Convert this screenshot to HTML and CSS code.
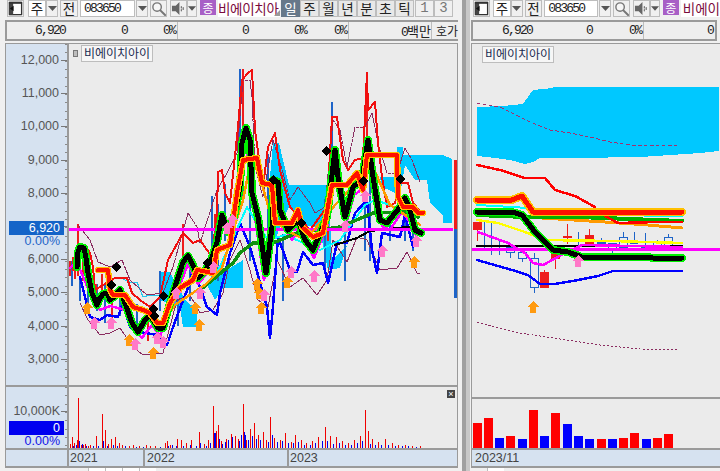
FILE: index.html
```html
<!DOCTYPE html>
<html lang="ko">
<head>
<meta charset="utf-8">
<title>비에이치아이</title>
<link rel="stylesheet" href="styles.css">
</head>
<body>
<svg class="defs" width="0" height="0">
  <defs>
    <path id="up" d="M0-6 6 0H3V6H-3V0H-6Z"/>
    <path id="dia" d="M0-5 5 0 0 5-5 0Z"/>
    <symbol id="win" viewBox="0 0 16 16"><rect x="1.5" y="1.5" width="13" height="13" fill="#fff" stroke="#333" stroke-width="1.4"/><path d="M1.5 1.5H5.5V14.5H1.5Z" fill="#444"/><path d="M1 1H15V3H1Z" fill="#333"/><path d="M6 5 2 8 6 11Z" fill="#111"/></symbol>
    <symbol id="arrow" viewBox="0 0 9 5"><path d="M0 0H9L4.500 5Z" fill="#555"/></symbol>
    <symbol id="mag" viewBox="0 0 16 16"><circle cx="6.500" cy="6.500" r="4.500" fill="#f6f6f6" stroke="#777" stroke-width="1.500"/><path d="M10 10 15 15" stroke="#777" stroke-width="2.200"/></symbol>
    <symbol id="spk" viewBox="0 0 16 16"><path d="M1 5H5L9 1V15L5 11H1Z" fill="#666"/><path d="M11 6V7.500M11 9V10.500M13 7V9" stroke="#666" stroke-width="1.200"/></symbol>
  </defs>
</svg>

<main class="app">
  <section class="panel panel-left">
    <div class="toolbar">
      <button class="tool tool-icon"><svg class="ico16"><use href="#win"/></svg></button>
      <span class="combo combo-type">주</span>
      <button class="tool drop"><svg class="ico-arrow"><use href="#arrow"/></svg></button>
      <button class="tool cap cap-jeon">전</button>
      <span class="code">083650</span>
      <button class="tool drop"><svg class="ico-arrow"><use href="#arrow"/></svg></button>
      <button class="tool tool-icon"><svg class="ico16"><use href="#mag"/></svg></button>
      <button class="tool tool-icon spk-gap"><svg class="ico16"><use href="#spk"/></svg></button>
      <button class="tool drop drop-thin"><svg class="ico-arrow"><use href="#arrow"/></svg></button>
      <span class="badge">종</span>
      <span class="name name-left">비에이치아</span>
      <button class="period active">일</button>
      <button class="period">주</button>
      <button class="period">월</button>
      <button class="period">년</button>
      <button class="period">분</button>
      <button class="period">초</button>
      <button class="period">틱</button>
      <button class="period num first-num">1</button>
      <button class="period num">3</button>
    </div>
    <div class="info info-left">
      <span class="cell c1 num-text">6,920</span>
      <span class="cell c2 num-text">0</span>
      <span class="cell c3 num-text sep">0%</span>
      <span class="cell c4 num-text">0</span>
      <span class="cell c5 num-text">0%</span>
      <span class="cell c6 num-text sep">0%</span>
      <span class="cell c7 sep"><span class="num-text">0</span>백만</span>
      <span class="cell c8">호가</span>
    </div>
    <div class="frame">
      <div class="row row-main">
        <div class="axis axis-main">
          <span class="tick">12,000</span>
          <span class="tick">11,000</span>
          <span class="tick">10,000</span>
          <span class="tick">9,000</span>
          <span class="tick">8,000</span>
          <span class="tick">7,000</span>
          <span class="tick">6,000</span>
          <span class="tick">5,000</span>
          <span class="tick">4,000</span>
          <span class="tick">3,000</span>
          <div class="tag tag-price"><b class="tag-value">6,920</b><i class="tag-pct">0.00%</i></div>
        </div>
        <div class="plot">
          <div class="legend legend-left"><i class="legend-box"></i><span class="legend-name">비에이치아이</span></div>
          <svg class="chart chart-left" viewBox="69 44 388 343" shape-rendering="crispEdges">
            <defs>
              <polyline id="lblack" points="77,267 78,252 80,247 84,248 86,258 88,273 92,293 97,305 100,298 103,294 107,293 110,300 115,296 120,290 125,303 132,323 138,332 145,320 150,315 158,328 163,328 168,310 175,287 183,262 188,256 193,265 198,278 204,272 210,263 217,242 222,215 228,232 234,217 240,187 242,143 246,128 250,140 252,193 258,217 266,273 272,227 273,180 278,182 280,210 288,230 298,220 305,240 313,250 327,217 335,150 338,177 345,217 353,187 362,180 368,140 373,177 380,220 387,223 400,207 405,198 410,210 415,230 421,233"/>
              <polyline id="lred" points="98,270 108,270 110,290 113,295 125,295 133,307 143,310 150,313 157,323 163,323 170,303 180,288 193,280 197,270 213,273 217,250 230,245 237,193 243,160 257,158 262,183 272,185 275,223 292,223 298,210 302,227 313,237 323,233 332,185 347,185 357,173 363,190 367,155 397,155 398,197 403,207 413,207 418,213 423,213"/>
            </defs>
            <path class="cloud" d="M159 272 170 272 185 300 197 310 197 327 183 327 180 307 159 300Z"/>
            <path class="cloud" d="M207 285 213 273 230 268 243 260 243 288 223 288 215 300Z"/>
            <path class="cloud" d="M268 200 273 143 279 143 289 185 327 185 329 200 332 260 347 245 340 268 328 270 322 240 315 227 300 225 290 205 285 215 275 240 268 230Z"/>
            <path class="cloud" d="M380 177 397 177 397 147 403 147 403 155 443 155 452 159 452 223 443 223 443 215 430 203 427 180 415 180 405 165 400 195 382 187Z"/>
            <path class="spike-blue" d="M72 262V285M80 278V300M88 275V305M97 285V310M105 285V322M120 290V315M137 305V335M160 272V310M178 285V325M190 270V300M212 197V270M218 205V280M225 185V240M240 70V170M243 80V195M250 140V260M268 155V265M283 235V300M325 200V270M332 103V190M345 210V280M365 150V250M370 180V260M390 215V240M405 200V240M413 215V250"/>
            <path class="spike-red" d="M70 262V275M73 258V270M75 262V278M78 225V275M83 262V280M96 285V300M102 275V300M112 300V320M148 315V340M183 225V270M215 215V255M243 70V125M367 73V160M328 200V240"/>
            <polyline class="cyan-thin" points="123,279 130,282 137,282 143,297 150,295 163,295 178,300"/>
            <polyline class="dash" points="78,225 90,240 98,262 110,267 122,260 130,280 147,295 163,293 173,267 188,213 197,227 200,243 217,190 227,173 237,153 243,80 250,80 252,97 255,167 263,197 273,140 283,173 290,200 298,187 310,203 315,213 325,207 333,120 340,130 347,167 355,127 365,127 372,113 378,143 387,173 397,173 405,148 412,160 420,182"/>
            <polyline class="dash-solid" points="80,303 88,320 100,335 110,333 120,328 133,347 143,355 163,353 177,300 190,295 200,313 213,310 223,293 230,260 240,240 250,270 258,300 268,307 277,260 290,287 303,278 317,295 327,280 333,240 347,262 357,237 367,240 380,270 397,268 407,252 417,273 420,274"/>
            <polyline class="blue-line" points="80,277 90,317 100,320 107,315 118,317 123,303 130,327 140,332 157,335 167,345 173,327 182,303 190,283 193,267 207,307 217,315 220,293 230,253 237,233 240,223 250,247 267,307 270,338 273,307 278,237 290,270 297,272 303,252 313,265 323,263 328,283 337,243 347,243 355,213 367,200 372,250 377,273 382,233 400,237 405,215 413,247"/>
            <polyline class="red-thin" points="77,263 85,245 90,253 93,267 95,290 103,285 115,278 127,278 132,293 140,300 150,307 160,297 168,260 183,233 193,243 200,240 207,250 212,257 215,230 217,213 218,172 222,170 225,193 230,203 238,127 242,80 248,73 252,70 255,130 263,187 268,147 275,133 280,170 290,207 310,230 327,207 332,117 337,117 343,160 348,170 355,160 363,158 367,73 368,110 375,102 378,143 382,177 387,207 395,203 400,183 408,183 413,203 422,213"/>
            <polyline class="cyan-line" points="217,273 232,240 247,207 258,225 268,240 285,235 320,250 340,240 365,205 375,200 390,205"/>
            <polyline class="magenta-thin" points="70,268 77,262 92,298 100,310 110,306 125,310 134,330 142,338 152,325 160,336 168,318 178,290 188,264 198,284 212,268 222,225 232,222 240,190 243,130 250,175 256,225 264,280 272,235 276,190 283,225 292,240 300,228 308,246 314,258 328,224 334,160 340,190 346,225 354,195 364,188 367,150 374,190 382,226 390,230 402,212 410,222 417,238"/>
            <polyline class="green-line" points="200,290 233,263 240,253 253,243 273,243 297,233 340,227 373,213 407,212 418,217"/>
            <polyline class="black-thin" points="335,245 357,238 370,231 407,227 413,228"/>
            <rect class="magenta-bar" x="69" y="228" width="384" height="3"/>
            <polyline class="orange-side" points="165,320 175,305 190,295 205,285 222,268 235,225 243,200 250,165 258,170 265,195 272,220 290,232 305,240 323,220 335,205 345,195 358,180 372,165 390,205 405,215 420,225"/>
            <use href="#lblack" class="thick-green"/>
            <use href="#lblack" class="thick-black"/>
            <use href="#lred" class="thick-yellow-l"/>
            <use href="#lred" class="thick-red-l"/>
            <g class="arrows-orange">
              <use href="#up" x="87" y="308"/><use href="#up" x="129" y="340"/><use href="#up" x="153" y="353"/><use href="#up" x="195" y="308"/><use href="#up" x="199" y="325"/><use href="#up" x="257" y="284"/><use href="#up" x="259" y="293"/><use href="#up" x="261" y="308"/><use href="#up" x="287" y="282"/><use href="#up" x="414" y="262"/>
            </g>
            <g class="arrows-pink">
              <use href="#up" x="94" y="323"/><use href="#up" x="111" y="323"/><use href="#up" x="135" y="344"/><use href="#up" x="157" y="338"/><use href="#up" x="163" y="342"/><use href="#up" x="176" y="293"/><use href="#up" x="200" y="293"/><use href="#up" x="213" y="267"/><use href="#up" x="227" y="228"/><use href="#up" x="232" y="220"/><use href="#up" x="264" y="295"/><use href="#up" x="291" y="272"/><use href="#up" x="314" y="276"/><use href="#up" x="345" y="226"/><use href="#up" x="365" y="196"/><use href="#up" x="382" y="251"/><use href="#up" x="416" y="241"/>
            </g>
            <g class="diamonds">
              <use href="#dia" x="116" y="267"/><use href="#dia" x="111" y="285"/><use href="#dia" x="153" y="309"/><use href="#dia" x="154" y="316"/><use href="#dia" x="163" y="296"/><use href="#dia" x="207" y="263"/><use href="#dia" x="273" y="180"/><use href="#dia" x="301" y="223"/><use href="#dia" x="326" y="151"/><use href="#dia" x="363" y="181"/><use href="#dia" x="400" y="179"/>
            </g>
            <rect class="range-red" x="454" y="160" width="3" height="69"/>
            <rect class="range-blue" x="454" y="229" width="3" height="69"/>
          </svg>
        </div>
      </div>
      <div class="row row-vol">
        <div class="axis axis-vol">
          <span class="tick tick-vol">10,000K</span>
          <div class="tag tag-vol"><b class="tag-value tag-value-vol">0</b><i class="tag-pct tag-pct-vol">0.00%</i></div>
        </div>
        <div class="plot">
          <svg class="chart chart-vol-left" viewBox="69 388 388 62" shape-rendering="crispEdges">
            <path class="vol-red" d="M70.500 449V445M72.500 449V438M74.500 449V444M77.500 449V441M78.500 449V399M81.500 449V446M83.500 449V446M85.500 449V445M88.500 449V447M90.500 449V446M96.500 449V437M102.500 449V415M105.500 449V431M108.500 449V445M111.500 449V440M115.500 449V438M119.500 449V444M122.500 449V446M129.500 449V447M133.500 449V446M139.500 449V447M146.500 449V446M150.500 449V447M155.500 449V447M165.500 449V444M167.500 449V442M170.500 449V446M177.500 449V440M181.500 449V441M186.500 449V444M191.500 449V441M199.500 449V433M204.500 449V445M208.500 449V441M213.500 449V407M216.500 449V432M218.500 449V426M221.500 449V442M226.500 449V440M231.500 449V435M235.500 449V437M238.500 449V440M243.500 449V405M246.500 449V441M250.500 449V430M254.500 449V424M258.500 449V436M263.500 449V433M266.500 449V441M270.500 449V418M274.500 449V439M280.500 449V441M285.500 449V434M291.500 449V443M295.500 449V436M301.500 449V441M306.500 449V444M312.500 449V442M318.500 449V438M325.500 449V428M330.500 449V437M336.500 449V438M342.500 449V442M348.500 449V444M354.500 449V441M360.500 449V437M365.500 449V411M368.500 449V432M372.500 449V440M378.500 449V443M385.500 449V440M392.500 449V444M398.500 449V446M405.500 449V446M412.500 449V447M420.500 449V447"/>
            <path class="vol-blue" d="M73.500 449V447M76.500 449V446M79.500 449V442M82.500 449V445M86.500 449V447M93.500 449V447M98.500 449V447M103.500 449V442M107.500 449V447M113.500 449V446M117.500 449V447M125.500 449V447M136.500 449V448M143.500 449V448M160.500 449V448M168.500 449V447M172.500 449V446M176.500 449V447M183.500 449V447M190.500 449V446M196.500 449V447M200.500 449V444M206.500 449V447M210.500 449V444M214.500 449V434M215.500 449V434M219.500 449V440M222.500 449V445M225.500 449V443M228.500 449V441M232.500 449V438M239.500 449V442M241.500 449V436M244.500 449V433M245.500 449V436M248.500 449V441M252.500 449V437M256.500 449V440M260.500 449V441M268.500 449V443M272.500 449V436M277.500 449V443M282.500 449V442M288.500 449V444M293.500 449V444M298.500 449V443M304.500 449V446M310.500 449V446M315.500 449V444M322.500 449V442M327.500 449V442M333.500 449V445M339.500 449V444M345.500 449V446M351.500 449V446M357.500 449V444M362.500 449V442M370.500 449V445M375.500 449V446M381.500 449V446M388.500 449V446M395.500 449V447M402.500 449V447M408.500 449V447M416.500 449V448"/>
          </svg>
          <span class="close-x">×</span>
        </div>
      </div>
      <div class="row row-date">
        <div class="axis axis-date"></div>
        <div class="dates">
          <span class="date date-2021">2021</span>
          <span class="date date-2022">2022</span>
          <span class="date">2023</span>
        </div>
      </div>
    </div>
    <div class="tabs"><i></i><i></i><i></i><i></i></div>
  </section>

  <div class="splitter"></div>

  <section class="panel panel-right">
    <div class="toolbar">
      <button class="tool tool-icon tool-icon-r"><svg class="ico16"><use href="#win"/></svg></button>
      <span class="combo combo-type">주</span>
      <button class="tool drop"><svg class="ico-arrow"><use href="#arrow"/></svg></button>
      <button class="tool cap cap-jeon-r">전</button>
      <span class="code code-r">083650</span>
      <button class="tool drop"><svg class="ico-arrow"><use href="#arrow"/></svg></button>
      <button class="tool tool-icon"><svg class="ico16"><use href="#mag"/></svg></button>
      <button class="tool tool-icon spk-gap"><svg class="ico16"><use href="#spk"/></svg></button>
      <button class="tool drop drop-thin"><svg class="ico-arrow"><use href="#arrow"/></svg></button>
      <span class="badge">종</span>
      <span class="name name-right">비에이</span>
    </div>
    <div class="info info-right">
      <span class="cell r1 num-text">6,920</span>
      <span class="cell r2 num-text">0</span>
      <span class="cell r3 num-text sep">0%</span>
      <span class="cell r4 num-text">0</span>
    </div>
    <div class="frame frame-right">
      <div class="row row-main-r">
        <div class="plot">
          <div class="legend legend-right"><span class="legend-name">비에이치아이</span></div>
          <svg class="chart chart-right" viewBox="472 44 248 355" shape-rendering="crispEdges">
            <defs>
              <polyline id="rblack" points="477,212 512,212 522,215 535,232 553,250 568,252 582,257 648,257 653,258 682,258"/>
              <polyline id="rred" points="477,200 512,200 522,196 533,212 682,212"/>
            </defs>
            <path class="cloud" d="M477 107 503 106 523 104 533 90 553 88 553 87 719 87 719 151 700 153 670 155 640 157 575 158 540 158 533 162 525 164 510 160 495 158 477 156Z"/>
            <polyline class="dash-white" points="477,103 500,107 510,112 530,122 550,130 570,133 590,137 610,142 630,145 650,146 660,145 680,146"/>
            <polyline class="red-med" points="477,165 500,170 525,178 545,178 555,190 575,196 595,207"/>
            <polyline class="cyan-med" points="477,205 528,208 540,212"/>
            <polyline class="cyan-med" points="645,216 682,216"/>
            <path class="cand-blue-wick" d="M484.500 222V250M491.500 221V255M499.500 240V255M510.500 244V258M522.500 252V262M534.500 253V293M601.500 238V246M612.500 243V253M623.500 232V247M634.500 232V244M645.500 233V247M657.500 240V247M668.500 234V245M578.500 232V250"/>
            <rect class="cand-hollow" x="506.500" y="247.500" width="8" height="5"/>
            <rect class="cand-hollow" x="518.500" y="252.500" width="8" height="6"/>
            <rect class="cand-hollow" x="530.500" y="258.500" width="8" height="29"/>
            <rect class="cand-hollow" x="608.500" y="243.500" width="8" height="5"/>
            <rect class="cand-hollow" x="619.500" y="237.500" width="8" height="10"/>
            <rect class="cand-hollow" x="653.500" y="241.500" width="8" height="6"/>
            <rect class="cand-hollow" x="664.500" y="237.500" width="8" height="8"/>
            <rect class="cand-blue-fill" x="597" y="242" width="9" height="3"/>
            <rect class="cand-blue-fill" x="630" y="242" width="8" height="2"/>
            <rect class="cand-blue-fill" x="641" y="246" width="9" height="2"/>
            <path class="cand-red-wick" d="M477.500 222V241M544.500 270V288M555.500 252V269M567.500 224V244M589.500 229V245"/>
            <rect class="cand-red" x="473" y="222" width="9" height="8"/>
            <rect class="cand-red" x="540" y="272" width="9" height="16"/>
            <rect class="cand-red" x="551" y="252" width="9" height="7"/>
            <rect class="cand-red" x="563" y="236" width="9" height="2"/>
            <rect class="cand-red" x="585" y="235" width="9" height="10"/>
            <polyline class="black-med" points="477,246 682,246"/>
            <polyline class="orange-band" points="542,218 605,222 648,225 682,228"/>
            <polyline class="green-band" points="477,215 525,217 578,217 682,221"/>
            <polyline class="red-med" points="605,216 618,223 658,222 682,222"/>
            <polyline class="yellow-band" points="477,220 498,223 525,232 545,240 612,241 682,243"/>
            <rect class="magenta-bar" x="472" y="248" width="248" height="3"/>
            <polyline class="magenta-med" points="478,232 508,243 525,253 533,263 543,265 565,253 582,245 682,247"/>
            <polyline class="blue-med" points="477,260 512,270 528,275 540,284 555,284 578,280 598,276 613,271 658,271 682,271"/>
            <use href="#rred" class="thick-yellow"/>
            <use href="#rred" class="thick-red"/>
            <use href="#rblack" class="thick-green"/>
            <use href="#rblack" class="thick-black"/>
            <use href="#up" class="arrow-o" x="533" y="307"/>
            <use href="#up" class="arrow-p" x="578" y="261"/>
            <polyline class="dash-dark" points="477,322 500,328 520,333 560,339 600,345 640,349 678,350"/>
          </svg>
        </div>
      </div>
      <div class="row row-vol-r">
        <div class="plot">
          <svg class="chart chart-vol-right" viewBox="472 400 248 50" shape-rendering="crispEdges">
            <g class="bars-red">
              <rect x="473" y="424" width="9" height="25"/><rect x="484" y="419" width="9" height="30"/><rect x="506" y="437" width="9" height="12"/><rect x="529" y="411" width="9" height="38"/><rect x="551" y="414" width="9" height="35"/><rect x="597" y="440" width="9" height="9"/><rect x="619" y="439" width="9" height="10"/><rect x="630" y="434" width="9" height="15"/><rect x="653" y="439" width="9" height="10"/><rect x="664" y="435" width="9" height="14"/>
            </g>
            <g class="bars-blue">
              <rect x="495" y="439" width="9" height="10"/><rect x="518" y="440" width="9" height="9"/><rect x="540" y="437" width="9" height="12"/><rect x="563" y="425" width="9" height="24"/><rect x="574" y="437" width="9" height="12"/><rect x="585" y="440" width="9" height="9"/><rect x="608" y="440" width="9" height="9"/><rect x="642" y="440" width="9" height="9"/>
            </g>
          </svg>
        </div>
      </div>
      <div class="row row-date">
        <div class="dates dates-right"><span class="date">2023/11</span></div>
      </div>
    </div>
    <div class="tabs tabs-right"><i></i></div>
  </section>
</main>
</body>
</html>
```

FILE: styles.css
```css
* { box-sizing: border-box; }
html, body { margin: 0; padding: 0; }
body {
  width: 720px;
  height: 471px;
  overflow: hidden;
  background: #f0f0f0;
  color: #222;
  font-family: "Noto Sans CJK KR", "Liberation Sans", sans-serif;
}
.defs { position: absolute; }
.app { display: flex; height: 471px; }
.panel { display: flex; flex-direction: column; height: 471px; }
.panel-left { width: 462px; padding-left: 5px; }
.panel-right { width: 249px; }
.splitter {
  width: 9px;
  background: linear-gradient(to right, #a0a0a0 0 4px, #c8c8c8 4px 8px, #f0f0f0 8px 9px);
}

/* toolbar */
.toolbar { display: flex; height: 20px; align-items: flex-start; }
.tool {
  display: flex;
  align-items: center;
  justify-content: center;
  height: 17px;
  padding: 0;
  margin: 0;
  background: #f0f0f0;
  border: 1px solid #bdbdbd;
  font: 13.500px/15px "Noto Sans CJK KR", sans-serif;
  color: #222;
}
.tool-icon { width: 17px; margin-right: 3px; }
.panel-left .tool-icon:first-child { margin-left: 2px; margin-right: 4px; }
.tool-icon-r { margin-left: 2px; margin-right: 3px !important; }
.spk-gap { margin-right: 0; }
.ico16 { width: 15px; height: 15px; display: block; }
.ico-arrow { width: 9px; height: 5px; display: block; }
.combo {
  width: 18px;
  height: 17px;
  background: #fff;
  border: 1px solid #bdbdbd;
  font-size: 13.500px;
  line-height: 15px;
  text-align: center;
}
.drop { width: 12px; margin-right: 2px; }
.drop-thin { width: 10px; margin-right: 3px; }
.cap { width: 18px; margin-right: 2px; }
.code {
  width: 55px;
  height: 17px;
  margin-right: 1px;
  padding-left: 3px;
  background: #fff;
  border: 1px solid #bdbdbd;
  font: 13px/15px "Liberation Mono", monospace;
  letter-spacing: -1.800px;
}
.badge {
  width: 16px;
  height: 15px;
  margin-right: 2px;
  background: #a85fc6;
  color: #fff;
  font-size: 12px;
  line-height: 15px;
  text-align: center;
}
.name {
  position: relative;
  height: 17px;
  background: #fff;
  color: #7a0a3c;
  font-size: 13.500px;
  line-height: 16px;
  white-space: nowrap;
}
.name-left { width: 62px; margin-right: 1px; padding-left: 0; letter-spacing: -0.300px; }
.name-left::after {
  content: "";
  position: absolute;
  right: 0;
  bottom: 1px;
  border-left: 6px solid transparent;
  border-bottom: 6px solid #9a9a9a;
}
.name-right { flex: 1; padding-left: 2px; }
.period {
  width: 19px;
  height: 17px;
  padding: 0;
  background: #e8e8e8;
  border: 1px solid #bdbdbd;
  font: 13.500px/15px "Noto Sans CJK KR", sans-serif;
  color: #222;
}
.period.active { background: #66788a; color: #fff; border-color: #66788a; }
.period.num { width: 19px; color: #777; font: 14px/15px "Liberation Mono", monospace; background: #f0f0f0; }
.first-num { margin-left: 1px; }

/* info row */
.info {
  display: flex;
  height: 21px;
  background: #eeeeee;
  border-top: 2px solid #9a9a9a;
  border-bottom: 2px solid #9a9a9a;
  font-size: 13px;
  line-height: 17px;
}
.info-left { width: 453px; border-left: 2px solid #9a9a9a; }
.info-right { width: 246px; border-left: 2px solid #9a9a9a; border-right: 2px solid #9a9a9a; }
.cell { display: block; text-align: right; white-space: nowrap; }
.num-text { font-family: "Liberation Mono", monospace; font-size: 13px; letter-spacing: -1.800px; }
.sep { border-right: 1.500px solid #bdbdbd; padding-right: 2px; }
.c1 { width: 58px; }
.c2 { width: 62px; }
.c3 { width: 51px; }
.c4 { width: 70px; }
.c5 { width: 58px; }
.c6 { width: 43px; }
.c7 { width: 83px; padding-right: 0; }
.c8 { width: 26px; font-size: 12px; }
.r1 { width: 59px; }
.r2 { width: 60px; }
.r3 { width: 52px; }
.r4 { width: 69px; }

/* chart frame */
.frame {
  width: 453px;
  height: 426px;
  margin-top: 2px;
  border: 1.500px solid #9a9a9a;
  border-bottom-width: 2px;
  display: flex;
  flex-direction: column;
  background: #ebebeb;
}
.frame-right { width: 249px; border-right: 0; }
.row { display: flex; }
.row-main { height: 343px; border-bottom: 2px solid #9a9a9a; }
.row-vol { height: 63px; border-bottom: 2px solid #9a9a9a; }
.row-date { flex: 1; }
.row-main-r { height: 355px; border-bottom: 2px solid #9a9a9a; }
.row-vol-r { height: 51px; border-bottom: 2px solid #9a9a9a; }
.axis {
  position: relative;
  width: 63px;
  flex: none;
  background: #d6e2f0;
  border-right: 2px solid #9a9a9a;
  color: #555;
  font: 12.500px/14px "Liberation Sans", sans-serif;
}
.axis-main, .axis-vol {
  background:
    repeating-linear-gradient(to bottom, #8a8a8a 0 1px, transparent 1px 8.330px) right top / 2px 100% no-repeat,
    #d6e2f0;
}
.axis-main { display: flex; flex-direction: column; padding-top: 9px; }
.tick {
  position: relative;
  display: block;
  height: 33.300px;
  padding-right: 8px;
  text-align: right;
  white-space: nowrap;
}
.tick::after {
  content: "";
  position: absolute;
  right: 0;
  top: 7px;
  width: 6px;
  height: 1px;
  background: #777;
}
.axis-vol { padding-top: 17px; }
.tick-vol { padding-right: 7px; }
.tag {
  position: absolute;
  left: 3px;
  width: 55px;
  text-align: right;
  font-size: 12.500px;
}
.tag-price { top: 177px; }
.tag-vol { top: 34px; }
.tag-value {
  display: block;
  height: 14px;
  padding-right: 4px;
  background: #1464c8;
  color: #fff;
  font-weight: normal;
  line-height: 14px;
}
.tag-value-vol { background: #0000f0; }
.tag-pct { display: block; padding-right: 4px; color: #1e64c8; font-style: normal; line-height: 12px; }
.tag-pct-vol { color: #1010e8; }
.plot { position: relative; flex: 1; background: #ebebeb; overflow: hidden; }
.chart { display: block; }
.chart-left { width: 388px; height: 343px; }
.chart-vol-left { width: 388px; height: 62px; }
.chart-right { width: 248px; height: 355px; }
.chart-vol-right { width: 248px; height: 50px; }

.legend { position: absolute; top: 1px; display: flex; align-items: center; gap: 3px; z-index: 1; }
.legend-left { left: 4px; }
.legend-right { left: 10px; top: 2px; }
.legend-box { width: 5px; height: 7px; background: #bdbdbd; border: 1px solid #777; }
.legend-name {
  width: 72px;
  height: 17px;
  background: #f6f6f6;
  border: 1px solid #bdbdbd;
  color: #1a2a50;
  font-size: 12px;
  line-height: 14px;
  text-align: center;
  white-space: nowrap;
}
.close-x {
  position: absolute;
  right: 2px;
  top: 3px;
  width: 8px;
  height: 8px;
  background: #444;
  color: #fff;
  font: 9px/8px "Liberation Sans", sans-serif;
  text-align: center;
}

/* dates */
.axis-date { background: #d6e2f0; height: 100%; }
.dates {
  flex: 1;
  display: flex;
  background: #d6e2f0;
  color: #444;
  font: 12.500px/16px "Liberation Sans", sans-serif;
}
.date { display: block; padding-left: 1px; }
.date-2021 { width: 76px; border-right: 2px solid #9a9a9a; }
.date-2022 { width: 144px; border-right: 2px solid #9a9a9a; padding-left: 2px; }
.dates-right { padding-left: 2px; }
.axis-date { border-right: 2px solid #9a9a9a; }

/* tabs */
.tabs { display: flex; height: 3px; padding-left: 83px; }
.tabs i { width: 17px; background: #fff; border-left: 1px solid #bdbdbd; }
.tabs-right { padding-left: 16px; }

/* chart strokes */
polyline, .spike-blue, .spike-red, .vol-red, .vol-blue, .cand-blue-wick, .cand-red-wick { fill: none; stroke-linejoin: round; stroke-linecap: round; }
use { fill: none; stroke-linejoin: round; stroke-linecap: round; }
.cloud { fill: #00c8ff; }
.spike-blue { stroke: #1e64c8; stroke-width: 1.500; }
.spike-red { stroke: #ee1c1c; stroke-width: 1.500; }
.cyan-thin { stroke: #22c8ee; stroke-width: 1; }
.dash { stroke: #8a2c60; stroke-width: 1; stroke-dasharray: 3 1; }
.dash-solid { stroke: #8a2c60; stroke-width: 1; }
.dash-white { stroke: #a03070; stroke-width: 1; stroke-dasharray: 3 3; }
.dash-dark { stroke: #8a2c60; stroke-width: 1; stroke-dasharray: 2 2; stroke-linecap: butt; }
.blue-line { stroke: #0000ff; stroke-width: 2.500; }
.red-thin { stroke: #f01010; stroke-width: 2; }
.cyan-line { stroke: #00ffff; stroke-width: 2; }
.magenta-thin { stroke: #ff00ff; stroke-width: 2.500; }
.green-line { stroke: #109010; stroke-width: 3.500; }
.black-thin { stroke: #000; stroke-width: 2; }
.orange-side { stroke: #ff9a00; stroke-width: 2.500; }
.magenta-bar { fill: #ff00ff; }
.thick-yellow { stroke: #ffc000; stroke-width: 8; }
.thick-red { stroke: #ff1000; stroke-width: 5; }
.thick-yellow-l { stroke: #ffc000; stroke-width: 6.500; }
.thick-red-l { stroke: #ff1000; stroke-width: 4; }
.thick-green { stroke: #00f000; stroke-width: 8; }
.thick-black { stroke: #000; stroke-width: 5; }
.arrows-orange use, .arrow-o { fill: #ff9a10; }
.arrows-pink use, .arrow-p { fill: #ff78c8; }
.diamonds use { fill: #000; }
.range-red { fill: #f01c1c; }
.range-blue { fill: #1e64c8; }
.vol-red { stroke: #f00000; stroke-width: 1; stroke-linecap: butt; }
.vol-blue { stroke: #0000f0; stroke-width: 1; stroke-linecap: butt; }
.bars-red rect { fill: #ff0000; }
.bars-blue rect { fill: #0000ff; }
.red-med { stroke: #ff0000; stroke-width: 2.500; }
.cyan-med { stroke: #00ffff; stroke-width: 2; }
.cand-blue-wick { stroke: #1e64c8; stroke-width: 1; stroke-linecap: butt; }
.cand-hollow { fill: #ebebeb; stroke: #1e64c8; stroke-width: 1; }
.cand-blue-fill { fill: #1e64c8; }
.cand-red-wick { stroke: #ee1c1c; stroke-width: 1; stroke-linecap: butt; }
.cand-red { fill: #ee1c1c; }
.black-med { stroke: #000; stroke-width: 2; }
.orange-band { stroke: #ff9a00; stroke-width: 3; }
.green-band { stroke: #00b000; stroke-width: 4; }
.yellow-band { stroke: #ffff00; stroke-width: 2.500; }
.magenta-med { stroke: #ff00ff; stroke-width: 2.500; }
.blue-med { stroke: #0000ff; stroke-width: 2.500; }
```
